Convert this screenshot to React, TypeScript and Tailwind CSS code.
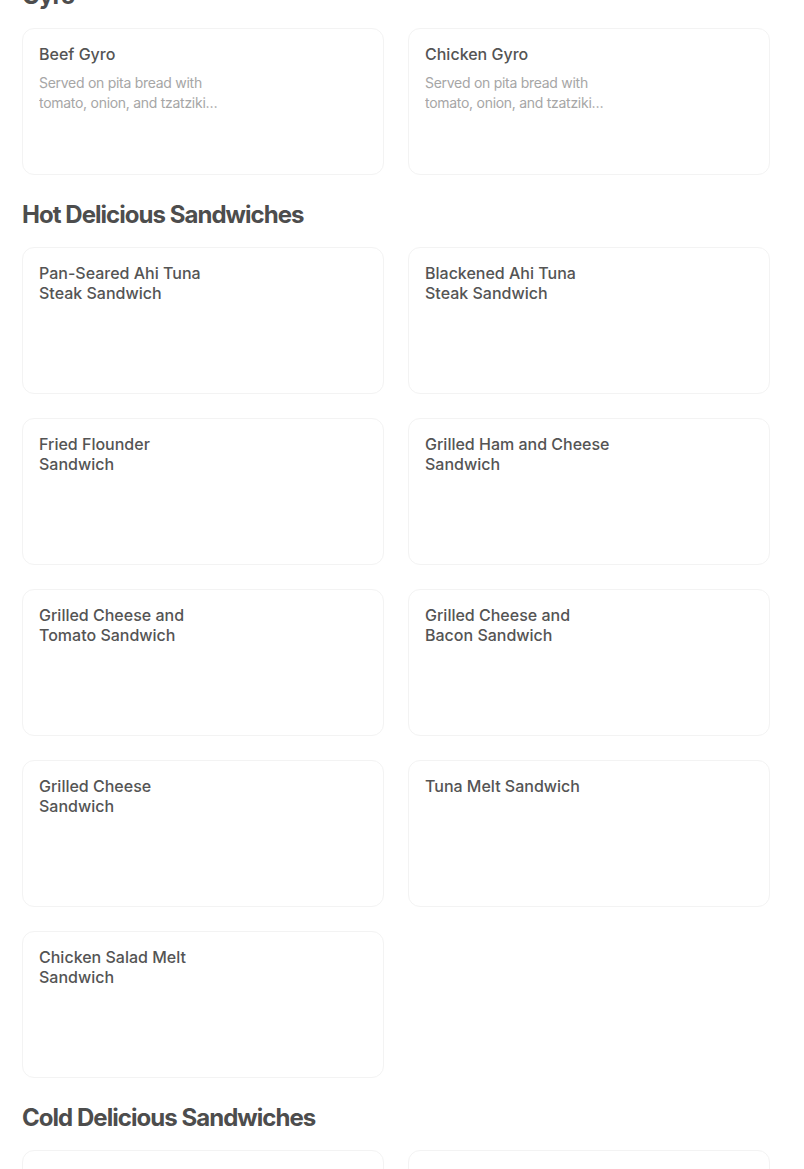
import React from 'react';

interface MenuItem {
    name: string;
    description?: string;
}

interface Section {
    title: string;
    items: MenuItem[];
}

const sections: Section[] = [
    {
        title: 'Gyro',
        items: [
            { name: 'Beef Gyro', description: 'Served on pita bread with tomato, onion, and tzatziki sauce. Served with fries.' },
            { name: 'Chicken Gyro', description: 'Served on pita bread with tomato, onion, and tzatziki sauce. Served with fries.' },
        ],
    },
    {
        title: 'Hot Delicious Sandwiches',
        items: [
            { name: 'Pan-Seared Ahi Tuna Steak Sandwich' },
            { name: 'Blackened Ahi Tuna Steak Sandwich' },
            { name: 'Fried Flounder Sandwich' },
            { name: 'Grilled Ham and Cheese Sandwich' },
            { name: 'Grilled Cheese and Tomato Sandwich' },
            { name: 'Grilled Cheese and Bacon Sandwich' },
            { name: 'Grilled Cheese Sandwich' },
            { name: 'Tuna Melt Sandwich' },
            { name: 'Chicken Salad Melt Sandwich' },
        ],
    },
    {
        title: 'Cold Delicious Sandwiches',
        items: [
            { name: 'Tuna Salad Sandwich' },
            { name: 'Egg Salad Sandwich' },
        ],
    },
];

const ItemCard: React.FC<{ item: MenuItem }> = ({ item }) => (
    <div className="h-[147px] rounded-xl border border-[#f3f3f3] bg-white px-4 pt-[15px]">
        <div className="w-[186px]">
            <h4 className="text-[16px] leading-5 font-medium text-[#545454]">{item.name}</h4>
            {item.description && (
                <p className="mt-[9px] text-[14px] leading-5 tracking-[-0.02em] text-[#a6a6a6] line-clamp-2">{item.description}</p>
            )}
        </div>
    </div>
);

export default function App() {
    return (
        <div className="min-h-screen bg-white pl-[22px] w-[793px] overflow-hidden" style={{ fontFamily: 'Inter, "Noto Sans", sans-serif' }}>
            <div className="-mt-[20px]">
                {sections.map((section, i) => (
                    <section key={section.title} className={i > 0 ? 'mt-6' : ''}>
                        <h3 className="h-8 leading-8 text-[24px] font-bold tracking-[-0.04em] text-[#4d4d4d]">{section.title}</h3>
                        <div className="mt-4 grid grid-cols-[362px_362px] gap-x-6 gap-y-6">
                            {section.items.map((item) => (
                                <ItemCard key={item.name} item={item} />
                            ))}
                        </div>
                    </section>
                ))}
            </div>
        </div>
    );
}
